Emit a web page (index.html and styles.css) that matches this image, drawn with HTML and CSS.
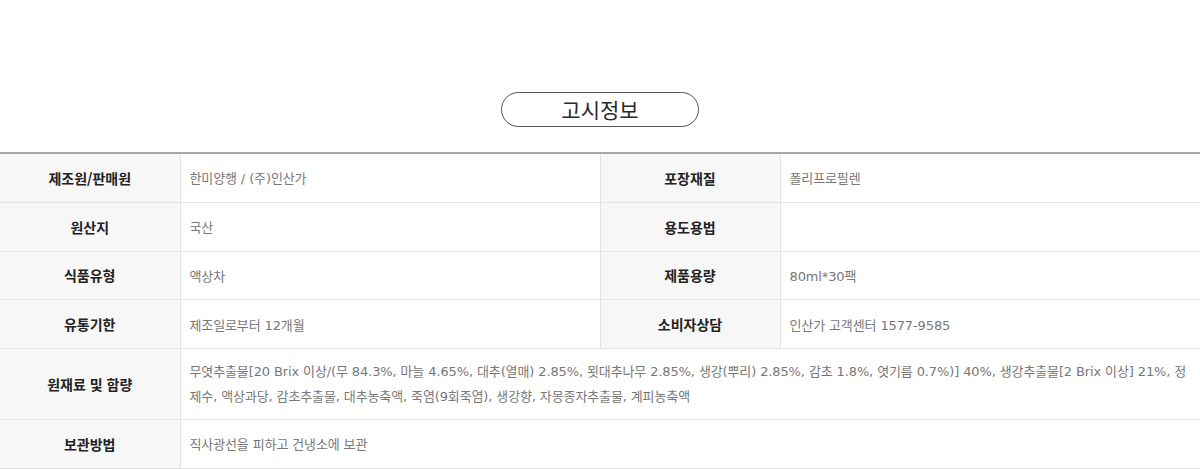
FILE: index.html
```html
<!DOCTYPE html>
<html lang="ko">
<head>
<meta charset="utf-8">
<link rel="stylesheet" href="styles.css">
</head>
<body>
<div class="page">
  <div class="title-wrap"><h2 class="title">고시정보</h2></div>
  <table class="info">
    <colgroup>
      <col class="c-label"><col class="c-value"><col class="c-label"><col class="c-value2">
    </colgroup>
    <tbody>
      <tr><th>제조원/판매원</th><td>한미양행 / (주)인산가</td><th>포장재질</th><td>폴리프로필렌</td></tr>
      <tr><th>원산지</th><td>국산</td><th>용도용법</th><td></td></tr>
      <tr><th>식품유형</th><td>액상차</td><th>제품용량</th><td>80ml*30팩</td></tr>
      <tr><th>유통기한</th><td>제조일로부터 12개월</td><th>소비자상담</th><td>인산가 고객센터 1577-9585</td></tr>
      <tr class="tall"><th>원재료 및 함량</th><td colspan="3">무엿추출물[20 Brix 이상/(무 84.3%, 마늘 4.65%, 대추(열매) 2.85%, 묏대추나무 2.85%, 생강(뿌리) 2.85%, 감초 1.8%, 엿기름 0.7%)] 40%, 생강추출물[2 Brix 이상] 21%, 정제수, 액상과당, 감초추출물, 대추농축액, 죽염(9회죽염), 생강향, 자몽종자추출물, 계피농축액</td></tr>
      <tr><th>보관방법</th><td colspan="3">직사광선을 피하고 건냉소에 보관</td></tr>
    </tbody>
  </table>
</div>
</body>
</html>
```

FILE: styles.css
```css
html, body {
  margin: 0;
  padding: 0;
  background: #fff;
}
body {
  font-family: "Noto Sans CJK KR", "Noto Sans", sans-serif;
  color: #333;
}
.page {
  width: 1200px;
  padding-top: 92px;
}
.title-wrap {
  display: flex;
  justify-content: center;
}
.title {
  margin: 0;
  width: 196px;
  height: 33px;
  border: 1px solid #555;
  border-radius: 18px;
  font-size: 21px;
  font-weight: 400;
  line-height: 33px;
  text-align: center;
  color: #2a2a2a;
}
.info {
  margin-top: 25px;
  width: 1200px;
  border-collapse: collapse;
  table-layout: fixed;
  border-top: 2px solid #a8a8a8;
}
.c-label { width: 180px; }
.c-value { width: 420px; }
.c-value2 { width: 420px; }
.info th,
.info td {
  border-bottom: 1px solid #e3e3e3;
  border-left: 1px solid #e3e3e3;
  height: 47.75px;
  padding: 0 9px;
  vertical-align: middle;
}
.info tr > :first-child { border-left: none; }
.info th {
  background: #f7f7f7;
  font-size: 14px;
  font-weight: 700;
  color: #222;
  text-align: center;
}
.info td {
  font-family: "DejaVu Sans", "Noto Sans CJK KR", sans-serif;
  font-size: 13px;
  letter-spacing: -0.12px;
  color: #777;
  text-align: left;
}
.info tr.tall td {
  line-height: 25px;
  height: 70px;
  padding: 0 4px 0 9px;
}
```
